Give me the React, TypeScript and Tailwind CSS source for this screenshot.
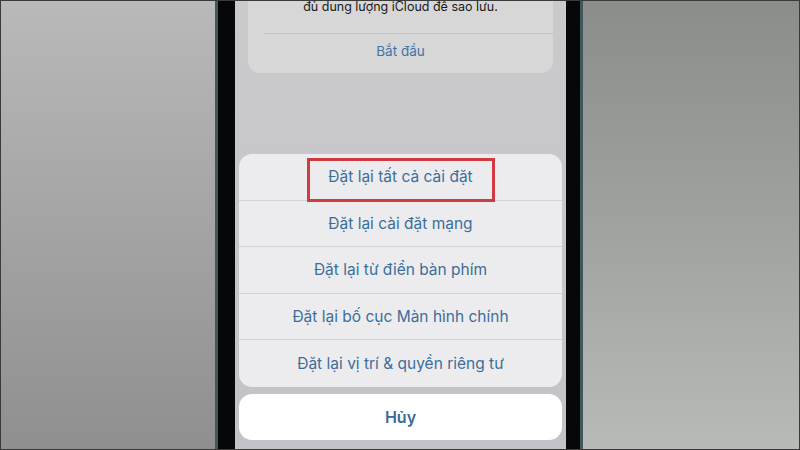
import React from 'react';

const options = [
  'Đặt lại tất cả cài đặt',
  'Đặt lại cài đặt mạng',
  'Đặt lại từ điển bàn phím',
  'Đặt lại bố cục Màn hình chính',
  'Đặt lại vị trí & quyền riêng tư',
];

export default function App() {
  return (
    <div
      className="w-[800px] h-[450px] flex border border-[#3a3a3a] overflow-hidden"
      style={{ fontFamily: 'Inter, "Noto Sans", sans-serif' }}
    >
      <div className="w-[214px] h-full bg-gradient-to-b from-[#b9b9b9] via-[#a4a4a4] to-[#8f8f8f]" />

      {/* phone frame */}
      <div className="w-[3px] h-full bg-[#41575a]" />
      <div className="w-[17px] h-full bg-[#050708]" />

      <div className="w-[331px] h-full flex flex-col bg-gradient-to-b from-[#cacacd] to-[#c3c3c7]">
        <div className="mx-[13px] h-[72px] bg-[#d7d7d8] rounded-b-[12px] flex flex-col">
          <div className="h-[32px] flex justify-center items-end overflow-hidden">
            <p className="text-[12.5px] leading-none text-[#1a1a1a] mb-[20px]">
              đủ dung lượng iCloud để sao lưu.
            </p>
          </div>
          <div className="ml-[16px] h-px bg-[#c3c3c5]" />
          <div className="flex-1 flex items-center justify-center text-[13.5px] text-[#3f74a6] pb-[4px]">
            Bắt đầu
          </div>
        </div>

        <div className="mt-[81px] mx-[4px] bg-[#ececee] rounded-[13px] flex flex-col">
          {options.map((label, i) => (
            <div
              key={label}
              className={`relative h-[46.6px] flex items-center justify-center text-[15.5px] text-[#3d6e9b] ${
                i < options.length - 1 ? 'border-b border-[#d3d3d6]' : ''
              }`}
            >
              {label}
              {i === 0 && (
                <div className="absolute left-[68px] top-[4px] w-[188px] h-[44px] border-[3px] border-[#cf3b40]" />
              )}
            </div>
          ))}
        </div>

        <div className="mt-[7px] mx-[4px] h-[46px] bg-white rounded-[13px] flex items-center justify-center text-[16px] font-semibold text-[#3a6a98]">
          Hủy
        </div>
      </div>

      <div className="w-[14px] h-full bg-[#050708]" />
      <div className="w-[3px] h-full bg-[#41575a]" />
      <div className="flex-1 h-full bg-gradient-to-b from-[#8b8d8b] via-[#a0a2a0] to-[#b7bab7]" />
    </div>
  );
}
